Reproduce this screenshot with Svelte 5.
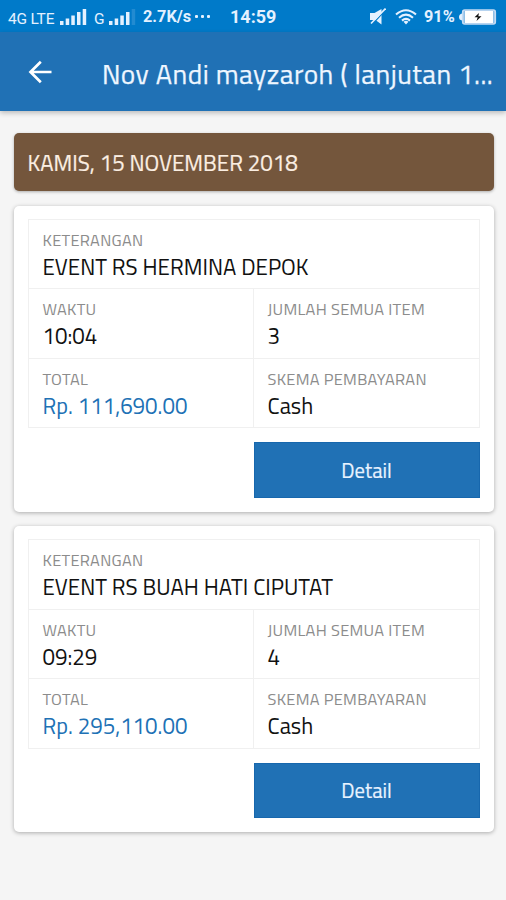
<script>
  const title = 'Nov Andi mayzaroh ( lanjutan 1...';
  const date = 'KAMIS, 15 NOVEMBER 2018';

  const events = [
    { name: 'EVENT RS HERMINA DEPOK', time: '10:04', items: 3, total: 'Rp. 111,690.00', payment: 'Cash' },
    { name: 'EVENT RS BUAH HATI CIPUTAT', time: '09:29', items: 4, total: 'Rp. 295,110.00', payment: 'Cash' }
  ];
</script>

<div class="screen">
  <div class="status">
    <span class="net lte">4G LTE</span>
    <svg class="signal" width="28" height="18" viewBox="0 0 28 18" fill="#e4f1ff">
      <path d="M0 13h3.500v4H0zM5.700 10.500h3.500V17H5.700zM11.300 7.500h3.500V17h-3.500zM17 4h3.500v13H17zM22.700 1h3.500v16h-3.500z" />
    </svg>
    <span class="net gsm">G</span>
    <svg class="signal" width="28" height="18" viewBox="0 0 28 18" fill="#e4f1ff">
      <path d="M0 13h3.500v4H0zM5.700 10.500h3.500V17H5.700zM11.300 7.500h3.500V17h-3.500zM17 4h3.500v13H17z" />
      <path d="M22.700 1h3.500v16h-3.500z" opacity=".15" />
    </svg>
    <span class="speed">2.7K/s</span>
    <span class="dots"><i></i><i></i><i></i></span>
    <span class="clock">14:59</span>
    <svg class="mute" width="16" height="17" viewBox="0 0 16 17" fill="#e4f1ff">
      <path d="M0 5h4.500l7-4v15.500L5.500 12H0z" />
      <path d="M15.500 2 2.500 16" stroke="#007ac9" stroke-width="1.200" />
      <path d="M15.500.5 1 15.500" stroke="#e4f1ff" stroke-width="1.600" />
    </svg>
    <svg class="wifi" width="22" height="16" viewBox="0 0 22 16" fill="none" stroke="#e4f1ff" stroke-width="2.100">
      <path d="M1 5.500Q11-3 21 5.500M4 8.700q7-6 14 0M7 11.600q4-3.500 8 0" />
      <path d="M8.500 12.800q2.500-2 5 0L11 15.600z" fill="#e4f1ff" stroke="none" />
    </svg>
    <span class="percent">91%</span>
    <svg class="battery" width="38" height="16" viewBox="0 0 38 16">
      <path d="M3 4.500Q0 5 0 8t3 3.500z" fill="#e4f1ff" />
      <rect x="3.700" y="1" width="32.600" height="14" rx="2" fill="#8fbfe6" stroke="#c5dcf4" stroke-width="1.600" />
      <rect x="6" y="2" width="28" height="12" fill="#fff" />
      <path d="m20 4-4.500 4.200h3.200L17.500 12l5-4.700h-3.200z" fill="#111" />
    </svg>
  </div>

  <header>
    <svg class="back" width="24" height="24" viewBox="0 0 24 24" fill="none" stroke="#fff" stroke-width="2.700">
      <path d="M23.500 12H3M12.800 1.800 2.500 12l10.300 10.200" />
    </svg>
    <h1>{title}</h1>
  </header>

  <main>
    <div class="date">{date}</div>

    {#each events as event}
      <section class="card">
        <div class="grid">
          <div class="cell wide">
            <div class="label">KETERANGAN</div>
            <div class="value">{event.name}</div>
          </div>
          <div class="cell">
            <div class="label">WAKTU</div>
            <div class="value">{event.time}</div>
          </div>
          <div class="cell">
            <div class="label">JUMLAH SEMUA ITEM</div>
            <div class="value">{event.items}</div>
          </div>
          <div class="cell">
            <div class="label">TOTAL</div>
            <div class="value total">{event.total}</div>
          </div>
          <div class="cell">
            <div class="label">SKEMA PEMBAYARAN</div>
            <div class="value">{event.payment}</div>
          </div>
        </div>
        <button>Detail</button>
      </section>
    {/each}
  </main>
</div>

<style>
  :global(body) { background: #f5f5f5; }
  .screen {
    height: 900px;
    overflow: hidden;
    background: #f5f5f5;
    font-family: 'Titillium Web', Roboto, 'Open Sans', sans-serif;
  }
  .status {
    display: flex;
    align-items: center;
    height: 32px;
    padding: 1px 9px 0 8px;
    box-sizing: border-box;
    background: #007ac9;
    color: #e4f1ff;
    font-family: Roboto, sans-serif;
    white-space: nowrap;
  }
  .status svg, .status span { flex: none; }
  .net { font-size: 15.5px; padding-top: 4px; }
  .lte { width: 52px; letter-spacing: -0.2px; }
  .gsm { width: 15px; margin-left: 6px; }
  .speed { width: 49px; margin-left: 6px; font-size: 16.3px; font-weight: 700; }
  .dots { display: flex; gap: 3px; width: 20px; margin-left: 3px; }
  .dots i { width: 3px; height: 3px; background: #e4f1ff; border-radius: 1px; }
  .clock { width: 46px; margin-left: 15px; font-size: 18px; font-weight: 700; }
  .mute { margin-left: auto; }
  .wifi { margin-left: 9px; }
  .percent { width: 31px; margin-left: 7px; font-size: 16.3px; font-weight: 700; }
  .battery { margin-left: 4px; }

  header {
    position: relative;
    display: flex;
    align-items: center;
    height: 79px;
    padding-left: 28px;
    box-sizing: border-box;
    background: #2071b5;
    box-shadow: 0 2px 5px rgba(0, 0, 0, 0.24);
  }
  h1 {
    margin: 4px 0 0 50px;
    color: #eef6ff;
    font-size: 27.4px;
    font-weight: 400;
    line-height: 32px;
    letter-spacing: 0.48px;
    white-space: nowrap;
    -webkit-text-stroke: 0.25px;
  }

  main { display: flex; flex-direction: column; gap: 14.5px; padding: 22px 12.5px 0 13.5px; }
  .date {
    height: 58px;
    padding: 1px 14px 0;
    box-sizing: border-box;
    border-radius: 5px;
    background: #74563c;
    color: #fbeee2;
    font-size: 22.3px;
    line-height: 58px;
    box-shadow: 0 1px 3px rgba(0, 0, 0, 0.3);
    -webkit-text-stroke: 0.2px;
  }
  .card {
    display: flex;
    flex-direction: column;
    height: 306px;
    padding: 13px 14px 14px;
    box-sizing: border-box;
    border-radius: 5px;
    background: #fff;
    box-shadow: 0 1px 4px rgba(0, 0, 0, 0.3);
  }
  .grid {
    display: grid;
    grid-template-columns: 225px 1fr;
    grid-template-rows: repeat(3, 69.5px);
    border-top: 1px solid #f0f0f0;
    border-left: 1px solid #f0f0f0;
  }
  .cell {
    padding: 10px 14px 0;
    border-right: 1px solid #f0f0f0;
    border-bottom: 1px solid #f0f0f0;
    white-space: nowrap;
  }
  .wide { grid-column: span 2; }
  .label { color: #8c8c8c; font-size: 16.4px; line-height: 20px; letter-spacing: 0.3px; }
  .value { margin-top: 4px; color: #111; font-size: 22.3px; line-height: 26px; }
  .total { color: #2071b5; }
  button {
    width: 226px;
    height: 56px;
    margin: 14px 0 0 auto;
    padding: 1px 0 0;
    border: 1px solid #1767ad;
    background: #2071b5;
    color: #e8f3ff;
    font-family: inherit;
    font-size: 20.6px;
    -webkit-text-stroke: 0.2px;
  }
</style>
